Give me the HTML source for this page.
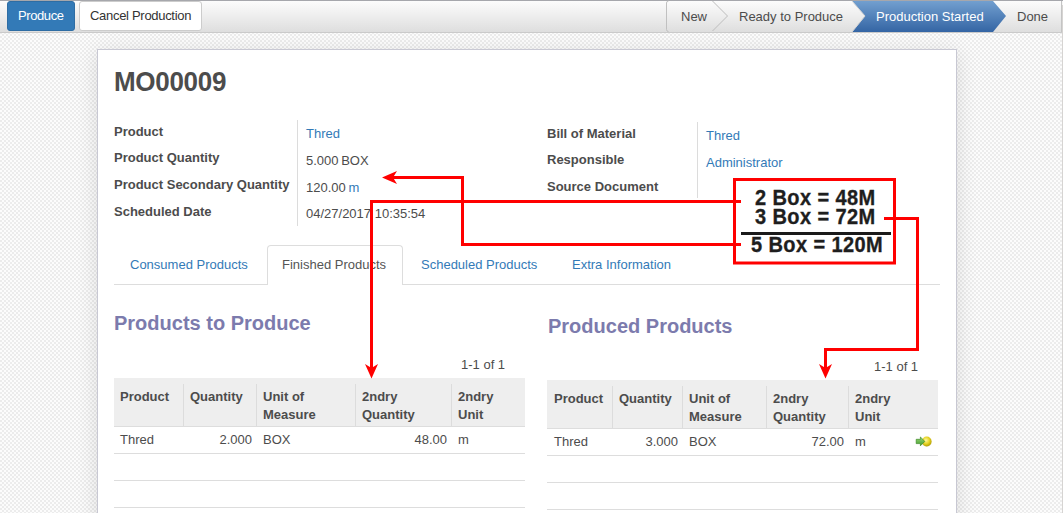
<!DOCTYPE html>
<html><head><meta charset="utf-8">
<style>
html,body{margin:0;padding:0;}
body{width:1063px;height:513px;overflow:hidden;position:relative;font-family:"Liberation Sans",sans-serif;font-size:13px;color:#4c4c4c;background:#f3f3f3;}
.a{position:absolute;white-space:nowrap;line-height:16px;}
.b{font-weight:bold;}
.lk{color:#337ab7;}
#bg{position:absolute;left:0;top:0;}
#hdr{position:absolute;left:0;top:0;width:1063px;height:33px;background:linear-gradient(#fcfcfc,#dedede);border-top:1px solid #a6a7ac;box-sizing:border-box;border-bottom:1px solid #cacaca;}
.btn{position:absolute;box-sizing:border-box;border-radius:3px;}
#sheet{position:absolute;left:97px;top:49px;width:860px;height:520px;box-sizing:border-box;background:#fff;border:1px solid #c8c8d3;box-shadow:0 4px 20px rgba(0,0,0,0.12);}
.vl{position:absolute;width:1px;background:#dcdcdc;}
.hl{position:absolute;height:1px;background:#dddddd;}
.th{position:absolute;background:#eeeeee;}
.bx{font-size:20px;line-height:20px;color:#1e1e1e;letter-spacing:0.4px;transform:scaleY(1.06);transform-origin:0 17px;-webkit-text-stroke:0.3px #1e1e1e;}
.sec{position:absolute;white-space:nowrap;font-weight:bold;font-size:20px;line-height:24px;color:#7c7bad;}
</style></head><body>
<svg id="bg" width="1063" height="513" shape-rendering="crispEdges">
<defs><pattern id="chk" x="0" y="0" width="4" height="4" patternUnits="userSpaceOnUse">
<rect width="4" height="4" fill="#fcfcfc"/><rect x="0" y="0" width="2" height="2" fill="#ececec"/><rect x="2" y="2" width="2" height="2" fill="#ececec"/></pattern></defs>
<rect width="1063" height="513" fill="url(#chk)"/>
</svg>

<div id="hdr"></div>
<div class="btn" style="left:7px;top:1px;width:68px;height:30px;background:#337ab7;border:1px solid #2e6da4;"></div>
<div class="a" style="left:18px;top:8px;color:#fff;letter-spacing:-0.4px;">Produce</div>
<div class="btn" style="left:79px;top:1px;width:123px;height:30px;background:#fff;border:1px solid #cccccc;"></div>
<div class="a" style="left:90px;top:8px;color:#333;letter-spacing:-0.3px;">Cancel Production</div>

<!-- status bar -->
<svg style="position:absolute;left:0;top:0" width="1063" height="33">
<defs>
<linearGradient id="gy" x1="0" y1="0" x2="0" y2="1"><stop offset="0" stop-color="#fcfcfc"/><stop offset="1" stop-color="#dedede"/></linearGradient>
<linearGradient id="bl" x1="0" y1="0" x2="0" y2="1"><stop offset="0" stop-color="#729fcf"/><stop offset="1" stop-color="#3465a4"/></linearGradient>
</defs>
<path d="M668.5 31.5 Q666.5 31.5 666.5 29.5 L666.5 3 Q666.5 1 668.5 1" fill="none" stroke="#c0c0c0" stroke-width="1"/>
<path d="M852 1 L993 1 L1006 16 L993 32 L852 32 L865 16 Z" fill="url(#bl)"/>
<path d="M712.5 1 L727.5 16 L712.5 31" fill="none" stroke="#bdbdbd" stroke-width="1"/>
<path d="M852 1 L865 16 L852 32" fill="none" stroke="#d4d4d4" stroke-width="1"/>
<line x1="1061.5" y1="1" x2="1061.5" y2="32" stroke="#c4c4c4"/>
</svg>
<div class="a" style="left:681px;top:9px;">New</div>
<div class="a" style="left:739px;top:9px;">Ready to Produce</div>
<div class="a" style="left:876px;top:9px;color:#fff;">Production Started</div>
<div class="a" style="left:1017px;top:9px;">Done</div>
<div style="position:absolute;left:1062px;top:5px;width:1px;height:508px;background:#d6d4d2;"></div><div style="position:absolute;left:1062px;top:1px;width:1px;height:4px;background:#f6f6f6;"></div>

<div id="sheet"></div>
<div class="a b" style="left:114px;top:67px;font-size:26px;line-height:30px;letter-spacing:-0.3px;transform:scaleY(1.07);transform-origin:0 23px;">MO00009</div>

<!-- left group -->
<div class="a b" style="left:114px;top:124px;">Product</div>
<div class="a b" style="left:114px;top:150px;">Product Quantity</div>
<div class="a b" style="left:114px;top:177px;">Product Secondary Quantity</div>
<div class="a b" style="left:114px;top:204px;">Scheduled Date</div>
<div class="vl" style="left:297px;top:120px;height:106px;"></div>
<div class="a lk" style="left:306px;top:126px;">Thred</div>
<div class="a" style="left:306px;top:153px;">5.000&#8201;BOX</div>
<div class="a" style="left:306px;top:180px;">120.00&#8201;<span class="lk">m</span></div>
<div class="a" style="left:306px;top:206px;">04/27/2017 10:35:54</div>

<!-- right group -->
<div class="a b" style="left:547px;top:126px;">Bill of Material</div>
<div class="a b" style="left:547px;top:152px;">Responsible</div>
<div class="a b" style="left:547px;top:179px;">Source Document</div>
<div class="vl" style="left:697px;top:122px;height:76px;"></div>
<div class="a lk" style="left:706px;top:128px;">Thred</div>
<div class="a lk" style="left:706px;top:155px;">Administrator</div>

<!-- tabs -->
<div class="hl" style="left:114px;top:284px;width:826px;"></div>
<div style="position:absolute;left:267px;top:245px;width:136px;height:40px;box-sizing:border-box;border:1px solid #dddddd;border-bottom:none;border-radius:4px 4px 0 0;background:#fff;"></div>
<div class="a lk" style="left:130px;top:257px;">Consumed Products</div>
<div class="a" style="left:282px;top:257px;color:#555;">Finished Products</div>
<div class="a lk" style="left:421px;top:257px;">Scheduled Products</div>
<div class="a lk" style="left:572px;top:257px;">Extra Information</div>

<!-- sections -->
<div class="sec" style="left:114px;top:311px;">Products to Produce</div>
<div class="sec" style="left:548px;top:314px;">Produced Products</div>
<div class="a" style="left:461px;top:357px;">1-1 of 1</div>
<div class="a" style="left:874px;top:359px;">1-1 of 1</div>

<!-- left table -->
<div class="th" style="left:114px;top:378px;width:411px;height:48px;"></div>
<div class="hl" style="left:114px;top:426px;width:411px;"></div>
<div class="hl" style="left:114px;top:453px;width:411px;"></div>
<div class="hl" style="left:114px;top:480px;width:411px;"></div>
<div class="hl" style="left:114px;top:507px;width:411px;"></div>
<div class="vl" style="left:183px;top:384px;height:42px;"></div>
<div class="vl" style="left:256px;top:384px;height:42px;"></div>
<div class="vl" style="left:355px;top:384px;height:42px;"></div>
<div class="vl" style="left:451px;top:384px;height:42px;"></div>
<div class="a b" style="left:120px;top:389px;">Product</div>
<div class="a b" style="left:190px;top:389px;">Quantity</div>
<div class="a b" style="left:263px;top:388px;line-height:18px;">Unit of<br>Measure</div>
<div class="a b" style="left:362px;top:388px;line-height:18px;">2ndry<br>Quantity</div>
<div class="a b" style="left:458px;top:388px;line-height:18px;">2ndry<br>Unit</div>
<div class="a" style="left:120px;top:432px;">Thred</div>
<div class="a" style="left:201px;top:432px;width:51px;text-align:right;">2.000</div>
<div class="a" style="left:263px;top:432px;">BOX</div>
<div class="a" style="left:396px;top:432px;width:51px;text-align:right;">48.00</div>
<div class="a" style="left:458px;top:432px;">m</div>

<!-- right table -->
<div class="th" style="left:547px;top:380px;width:391px;height:48px;"></div>
<div class="hl" style="left:547px;top:428px;width:391px;"></div>
<div class="hl" style="left:547px;top:455px;width:391px;"></div>
<div class="hl" style="left:547px;top:482px;width:391px;"></div>
<div class="hl" style="left:547px;top:509px;width:391px;"></div>
<div class="vl" style="left:612px;top:386px;height:42px;"></div>
<div class="vl" style="left:682px;top:386px;height:42px;"></div>
<div class="vl" style="left:766px;top:386px;height:42px;"></div>
<div class="vl" style="left:848px;top:386px;height:42px;"></div>
<div class="a b" style="left:554px;top:391px;">Product</div>
<div class="a b" style="left:619px;top:391px;">Quantity</div>
<div class="a b" style="left:689px;top:390px;line-height:18px;">Unit of<br>Measure</div>
<div class="a b" style="left:773px;top:390px;line-height:18px;">2ndry<br>Quantity</div>
<div class="a b" style="left:855px;top:390px;line-height:18px;">2ndry<br>Unit</div>
<div class="a" style="left:554px;top:434px;">Thred</div>
<div class="a" style="left:627px;top:434px;width:51px;text-align:right;">3.000</div>
<div class="a" style="left:689px;top:434px;">BOX</div>
<div class="a" style="left:793px;top:434px;width:51px;text-align:right;">72.00</div>
<div class="a" style="left:855px;top:434px;">m</div>
<svg style="position:absolute;left:914px;top:434px" width="20" height="16">
<defs><radialGradient id="ball" cx="0.42" cy="0.38" r="0.62"><stop offset="0" stop-color="#fff7a0"/><stop offset="0.55" stop-color="#e8d62a"/><stop offset="1" stop-color="#b8a200"/></radialGradient>
<linearGradient id="grn" x1="0" y1="0" x2="0" y2="1"><stop offset="0" stop-color="#9bd97a"/><stop offset="1" stop-color="#3f9a2a"/></linearGradient></defs>
<ellipse cx="12.8" cy="8.6" rx="4.6" ry="4.2" fill="rgba(0,0,0,0.10)"/>
<circle cx="12.7" cy="7.5" r="4.9" fill="url(#ball)"/>
<path d="M2.2 5.3 L6.4 5.3 L6.4 3 L10.8 7.4 L6.4 11.8 L6.4 9.6 L2.2 9.6 Z" fill="url(#grn)" stroke="#3d8a25" stroke-width="0.7"/>
</svg>

<!-- annotations -->
<svg style="position:absolute;left:0;top:0" width="1063" height="513">
<g fill="none" stroke="#ff0000" stroke-width="3">
<rect x="734.5" y="179.5" width="160" height="83.5"/>
<polyline points="741,244.5 462.5,244.5 462.5,177.5 392,177.5"/>
<polyline points="741,201.5 371.5,201.5 371.5,368"/>
<polyline points="884,218.5 917.5,218.5 917.5,349.5 825.5,349.5 825.5,368"/>
</g>
<g fill="#ff0000">
<path d="M382 177.5 L397 171 L393 177.5 L397 184 Z"/>
<path d="M371.5 378.5 L365 364 L371.5 368 L378 364 Z"/>
<path d="M825.5 378.5 L819 364 L825.5 368 L832 364 Z"/>
</g>
<rect x="741" y="232" width="150" height="3" fill="#1a1a1a"/>
</svg>
<div class="a b bx" style="left:755px;top:188px;">2 Box = 48M</div>
<div class="a b bx" style="left:755px;top:207px;">3 Box = 72M</div>
<div class="a b bx" style="left:751px;top:235px;">5 Box = 120M</div>
</body></html>
